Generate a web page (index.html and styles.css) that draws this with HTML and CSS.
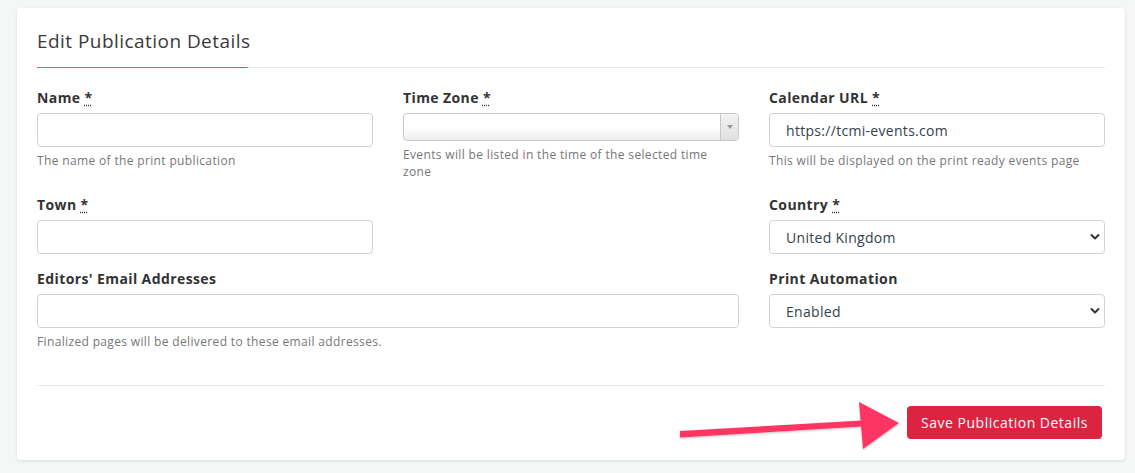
FILE: index.html
```html
<!DOCTYPE html>
<html>
<head>
<meta charset="utf-8">
<link rel="stylesheet" href="styles.css">
</head>
<body>
<div class="card">
  <div class="card-header">
    <h2 class="title">Edit Publication Details</h2>
  </div>
  <form class="form">
    <div class="group">
      <label class="label">Name <abbr class="req">*</abbr></label>
      <input class="input" type="text">
      <div class="help">The name of the print publication</div>
    </div>
    <div class="group">
      <label class="label">Time Zone <abbr class="req">*</abbr></label>
      <div class="s2">
        <span class="s2-text"></span>
        <span class="s2-arrow"><span class="s2-tri"></span></span>
      </div>
      <div class="help">Events will be listed in the time of the selected time zone</div>
    </div>
    <div class="group">
      <label class="label">Calendar URL <abbr class="req">*</abbr></label>
      <input class="input" type="text" value="https://tcmi-events.com">
      <div class="help">This will be displayed on the print ready events page</div>
    </div>
    <div class="group">
      <label class="label">Town <abbr class="req">*</abbr></label>
      <input class="input" type="text">
    </div>
    <div class="group empty"></div>
    <div class="group">
      <label class="label">Country <abbr class="req">*</abbr></label>
      <div class="select">
        <span class="select-text">United Kingdom</span>
        <svg class="chev" width="10" height="8" viewBox="0 0 10 8"><path d="M1.5 2 L5 5.5 L8.5 2" fill="none" stroke="#333" stroke-width="2" stroke-linecap="round" stroke-linejoin="round"/></svg>
      </div>
    </div>
    <div class="group span2">
      <label class="label">Editors' Email Addresses</label>
      <input class="input" type="text">
      <div class="help">Finalized pages will be delivered to these email addresses.</div>
    </div>
    <div class="group">
      <label class="label">Print Automation</label>
      <div class="select">
        <span class="select-text">Enabled</span>
        <svg class="chev" width="10" height="8" viewBox="0 0 10 8"><path d="M1.5 2 L5 5.5 L8.5 2" fill="none" stroke="#333" stroke-width="2" stroke-linecap="round" stroke-linejoin="round"/></svg>
      </div>
    </div>
  </form>
  <div class="footer">
    <button class="btn" type="button">Save Publication Details</button>
  </div>
</div>
<svg class="arrow" width="1135" height="473" viewBox="0 0 1135 473">
  <defs>
    <filter id="sh" x="-10%" y="-50%" width="120%" height="200%">
      <feDropShadow dx="0" dy="1" stdDeviation="1" flood-color="#000" flood-opacity="0.25"/>
    </filter>
  </defs>
  <g filter="url(#sh)" fill="#fd3563">
    <polygon points="680,431 862,420.5 862,426.5 680,437.5"/>
    <polygon points="859,402 899,423 863,449"/>
  </g>
</svg>
</body>
</html>
```
FILE: styles.css
```css
* { box-sizing: border-box; }
html, body { margin: 0; padding: 0; }
body {
  background: #f5f7f7;
  font-family: "Open Sans", "DejaVu Sans", sans-serif;
  color: #333;
  width: 1135px;
  height: 473px;
  position: relative;
  overflow: hidden;
  padding: 8px 10px 0 17px;
}
.card {
  background: #fff;
  width: 1108px;
  border-radius: 4px;
  box-shadow: 0 1px 3px rgba(40, 60, 70, 0.15);
  padding: 0 20px 21px 20px;
}
.card-header {
  padding-top: 20px;
  border-bottom: 1px solid #e6eaea;
}
.title {
  display: inline-block;
  margin: 0;
  font-size: 19px;
  font-weight: 400;
  letter-spacing: 0.45px;
  line-height: 26px;
  color: #3a3a3a;
  padding-bottom: 13px;
  margin-bottom: -1px;
  border-bottom: 1px solid #ee4b63;
  width: 211px;
  white-space: nowrap;
}
.form {
  display: grid;
  grid-template-columns: repeat(3, 1fr);
  column-gap: 30px;
  padding-top: 20px;
  padding-bottom: 20px;
  border-bottom: 1px solid #e6eaea;
}
.group { margin-bottom: 15px; }
.span2 { grid-column: span 2; }
.label {
  display: block;
  font-size: 14px;
  font-weight: 700;
  letter-spacing: 0.4px;
  line-height: 20px;
  margin-bottom: 5px;
  color: #333;
}
.req {
  text-decoration: underline dotted;
  text-underline-offset: 2px;
  border: none;
}
.input, .select {
  display: block;
  width: 100%;
  height: 34px;
  border: 1px solid #cfd3d5;
  border-radius: 4px;
  background: #fff;
  font-family: inherit;
  font-size: 14px;
  letter-spacing: 0.3px;
  color: #34424b;
  padding: 0 16px;
  outline: none;
}
.select {
  display: flex;
  align-items: center;
  justify-content: space-between;
  padding-right: 4px;
}
.help {
  font-size: 12px;
  letter-spacing: 0.35px;
  line-height: 17px;
  color: #777;
  margin-top: 5px;
}
.s2 {
  display: flex;
  height: 28px;
  border: 1px solid #c8c8c8;
  border-radius: 4px;
  background: linear-gradient(to bottom, #fff 0%, #fff 50%, #eee 100%);
}
.s2-text { flex: 1; }
.s2-arrow {
  width: 18px;
  border-left: 1px solid #c8c8c8;
  display: flex;
  align-items: center;
  justify-content: center;
  background: linear-gradient(to bottom, #f2f2f2 0%, #e0e0e0 100%);
  border-radius: 0 4px 4px 0;
}
.s2-tri {
  width: 0; height: 0;
  border-left: 3px solid transparent;
  border-right: 3px solid transparent;
  border-top: 4px solid #999;
}
.footer {
  display: flex;
  justify-content: flex-end;
  padding-top: 20px;
  padding-right: 3px;
}
.btn {
  height: 33px;
  width: 195px;
  background: #dc2340;
  color: #fff;
  border: none;
  border-radius: 4px;
  font-family: inherit;
  font-size: 14px;
  letter-spacing: 0.5px;
  padding: 0;
}
.arrow {
  position: absolute;
  left: 0; top: 0;
  pointer-events: none;
}
```
